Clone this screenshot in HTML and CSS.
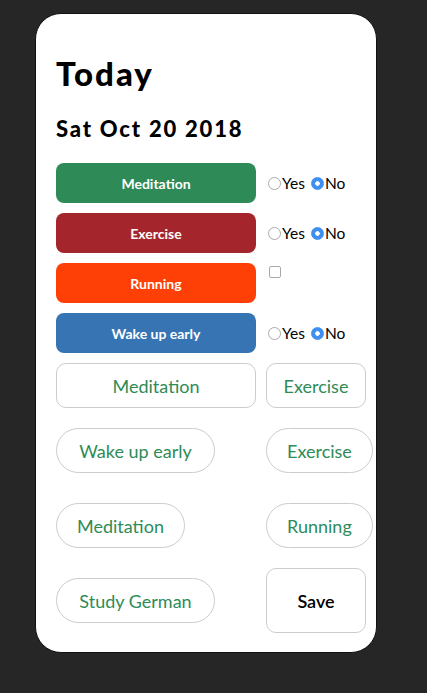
FILE: index.html
```html
<!DOCTYPE html>
<html lang="en">
<head>
    <meta charset="UTF-8">
    <meta name="viewport" content="width=device-width, initial-scale=1.0">
    <title>Habits - Today</title>
    <link rel="stylesheet" href="styles.css">
</head>
<body>

    <div class="kartu">
        <!-- Judul -->
        <h1 class="judul">Today</h1>
        <h2 class="tanggal">Sat Oct 20 2018</h2>

        <!-- Kebiasaan hari ini -->
        <div class="kebiasaan">
            <div class="baris">
                <button class="tag hijau">Meditation</button>
                <div class="pilihan">
                    <label><input type="radio" name="meditation">Yes</label>
                    <label><input type="radio" name="meditation" checked>No</label>
                </div>
            </div>
            <div class="baris">
                <button class="tag merah">Exercise</button>
                <div class="pilihan">
                    <label><input type="radio" name="exercise">Yes</label>
                    <label><input type="radio" name="exercise" checked>No</label>
                </div>
            </div>
            <div class="baris atas">
                <button class="tag oranye">Running</button>
                <div class="pilihan">
                    <input type="checkbox" class="centang">
                </div>
            </div>
            <div class="baris">
                <button class="tag biru">Wake up early</button>
                <div class="pilihan">
                    <label><input type="radio" name="wake">Yes</label>
                    <label><input type="radio" name="wake" checked>No</label>
                </div>
            </div>
        </div>

        <!-- Daftar pilihan -->
        <div class="daftar">
            <button class="opsi lebar">Meditation</button>
            <button class="opsi kotak">Exercise</button>

            <button class="opsi pil panjang">Wake up early</button>
            <button class="opsi pil">Exercise</button>

            <button class="opsi pil jauh">Meditation</button>
            <button class="opsi pil jauh">Running</button>

            <button class="opsi pil panjang">Study German</button>
            <button class="opsi simpan">Save</button>
        </div>
    </div>

</body>
</html>
```

FILE: styles.css
```css
/* --- Tampilan kartu kebiasaan --- */
:root {
    --bg-color: #262626;
    --card-bg: #ffffff;
    --green: #2e8b57;
    --red: #a4262c;
    --orange: #ff4006;
    --blue: #3774b4;
    --line: #cccccc;
    --radio-blue: #3f8ff0;
}

body {
    margin: 0;
    background-color: var(--bg-color);
    font-family: Lato, "Open Sans", sans-serif;
}

.kartu {
    box-sizing: border-box;
    width: 342px;
    height: 640px;
    margin: 13px 0 0 35px;
    padding: 39px 20px 20px;
    background-color: var(--card-bg);
    border: 1px solid #111;
    border-radius: 26px;
}

.judul {
    margin: 0;
    font-size: 33px;
    font-weight: 900;
    line-height: 40px;
    letter-spacing: 2px;
    color: #000;
}

.tanggal {
    margin: 22px 0 20px;
    font-size: 22px;
    font-weight: 900;
    line-height: 28px;
    letter-spacing: 1.8px;
    color: #000;
}

/* Baris kebiasaan */
.baris {
    display: flex;
    align-items: center;
    margin-bottom: 10px;
}

.baris.atas {
    align-items: flex-start;
}

.tag {
    width: 200px;
    height: 40px;
    border: none;
    border-radius: 8px;
    color: #fff;
    font-family: inherit;
    font-size: 14px;
    font-weight: 700;
    cursor: pointer;
}

.hijau { background-color: var(--green); }
.merah { background-color: var(--red); }
.oranye { background-color: var(--orange); }
.biru { background-color: var(--blue); }

.pilihan {
    display: flex;
    align-items: center;
    gap: 6px;
    margin-left: 12px;
    font-size: 15.5px;
    color: #000;
}

.pilihan label {
    display: flex;
    align-items: center;
    gap: 1px;
}

.pilihan input[type="radio"] {
    appearance: none;
    width: 13px;
    height: 13px;
    margin: 0;
    border: 1px solid #aaa;
    border-radius: 50%;
    background: #fff;
}

.pilihan input[type="radio"]:checked {
    border-color: var(--radio-blue);
    background: radial-gradient(circle, #fff 0 2px, var(--radio-blue) 2.5px);
}

.centang {
    appearance: none;
    width: 12px;
    height: 12px;
    margin: 3px 0 0 1px;
    border: 1px solid #aaa;
    border-radius: 2px;
    background: #fff;
}

/* Tombol pilihan */
.daftar {
    display: grid;
    grid-template-columns: 200px auto;
    column-gap: 10px;
    row-gap: 20px;
    justify-items: start;
    align-items: center;
}

.opsi {
    height: 45px;
    padding: 0 20px;
    background-color: #fff;
    border: 1px solid var(--line);
    border-radius: 10px;
    color: var(--green);
    font-family: inherit;
    font-size: 18px;
    cursor: pointer;
}

.opsi.lebar {
    width: 200px;
}

.opsi.kotak {
    width: 100px;
    padding: 0;
}

.opsi.pil {
    border-radius: 23px;
}

.opsi.panjang {
    width: 159px;
}

.opsi.jauh {
    margin-top: 10px;
}

.opsi.simpan {
    width: 100px;
    height: 65px;
    color: #000;
    font-weight: 600;
}
```
